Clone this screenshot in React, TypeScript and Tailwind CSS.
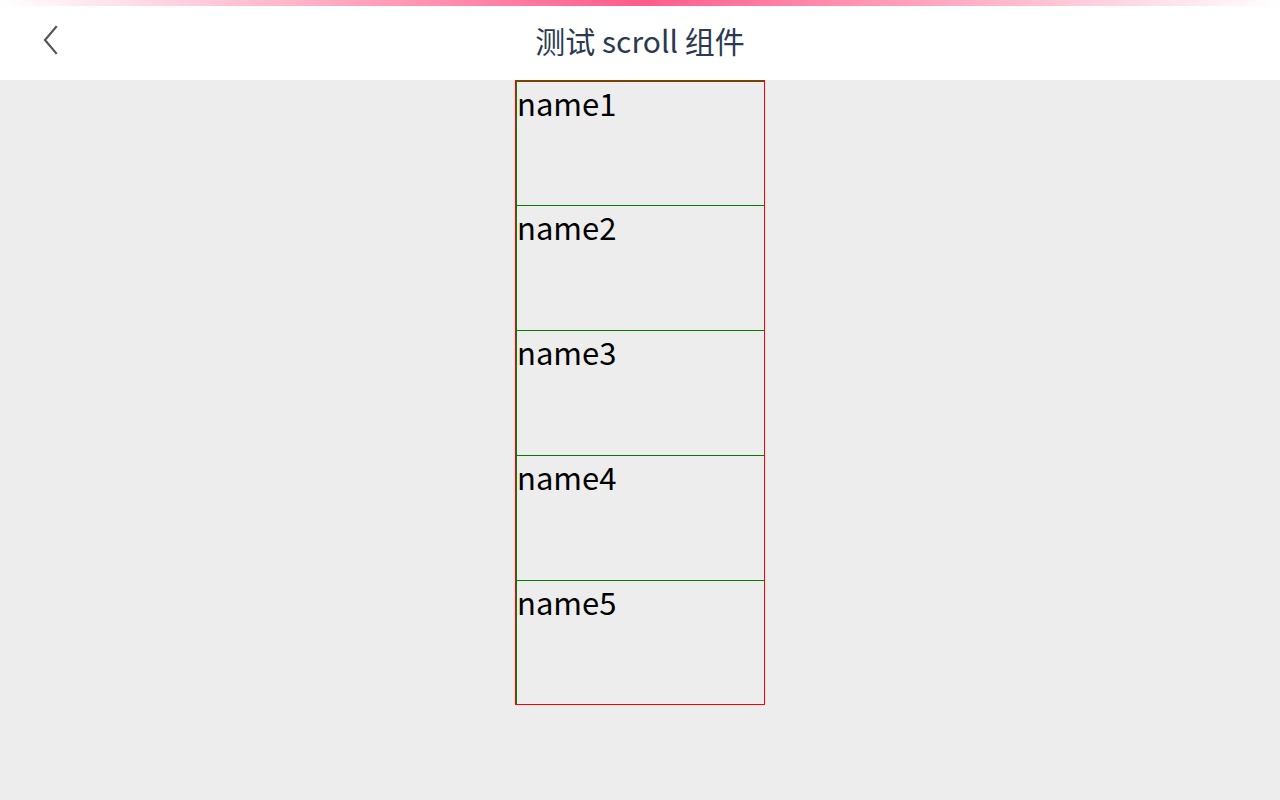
export default function App() {
  const items = ["name1", "name2", "name3", "name4", "name5"]

  return (
    <div
      className="min-h-[800px] w-full bg-[#ededed]"
      style={{ fontFamily: '"Noto Sans CJK SC", "Noto Sans", sans-serif' }}
    >
      {/* 顶部导航 */}
      <div className="relative h-[80px] bg-white">
        <div className="absolute left-0 right-0 top-0 h-[6px] bg-[linear-gradient(to_right,rgba(255,92,138,0),#ff5c8a_50%,rgba(255,92,138,0))]" />
        <div className="flex h-full items-center justify-center">
          <button className="absolute left-[36px] top-[22px] flex h-[36px] w-[30px] items-center justify-center">
            <svg width="18" height="32" viewBox="0 0 18 32" fill="none">
              <path d="M14 3 L3 16 L14 29" stroke="#555" strokeWidth="2.2" strokeLinecap="square" />
            </svg>
          </button>
          <h1 className="text-[30px] font-normal leading-none text-[#2c3a50]">测试 scroll 组件</h1>
        </div>
      </div>

      {/* 列表 */}
      <div className="flex justify-center">
        <div className="flex h-[625px] w-[250px] flex-col overflow-hidden border border-[#ff0000]">
          {items.map((name) => (
            <div
              key={name}
              className="h-[125px] shrink-0 border-l border-t border-[#008000] text-[31px] leading-[42px] text-black first:h-[124px] last:h-[124px]"
            >
              {name}
            </div>
          ))}
        </div>
      </div>
    </div>
  )
}
